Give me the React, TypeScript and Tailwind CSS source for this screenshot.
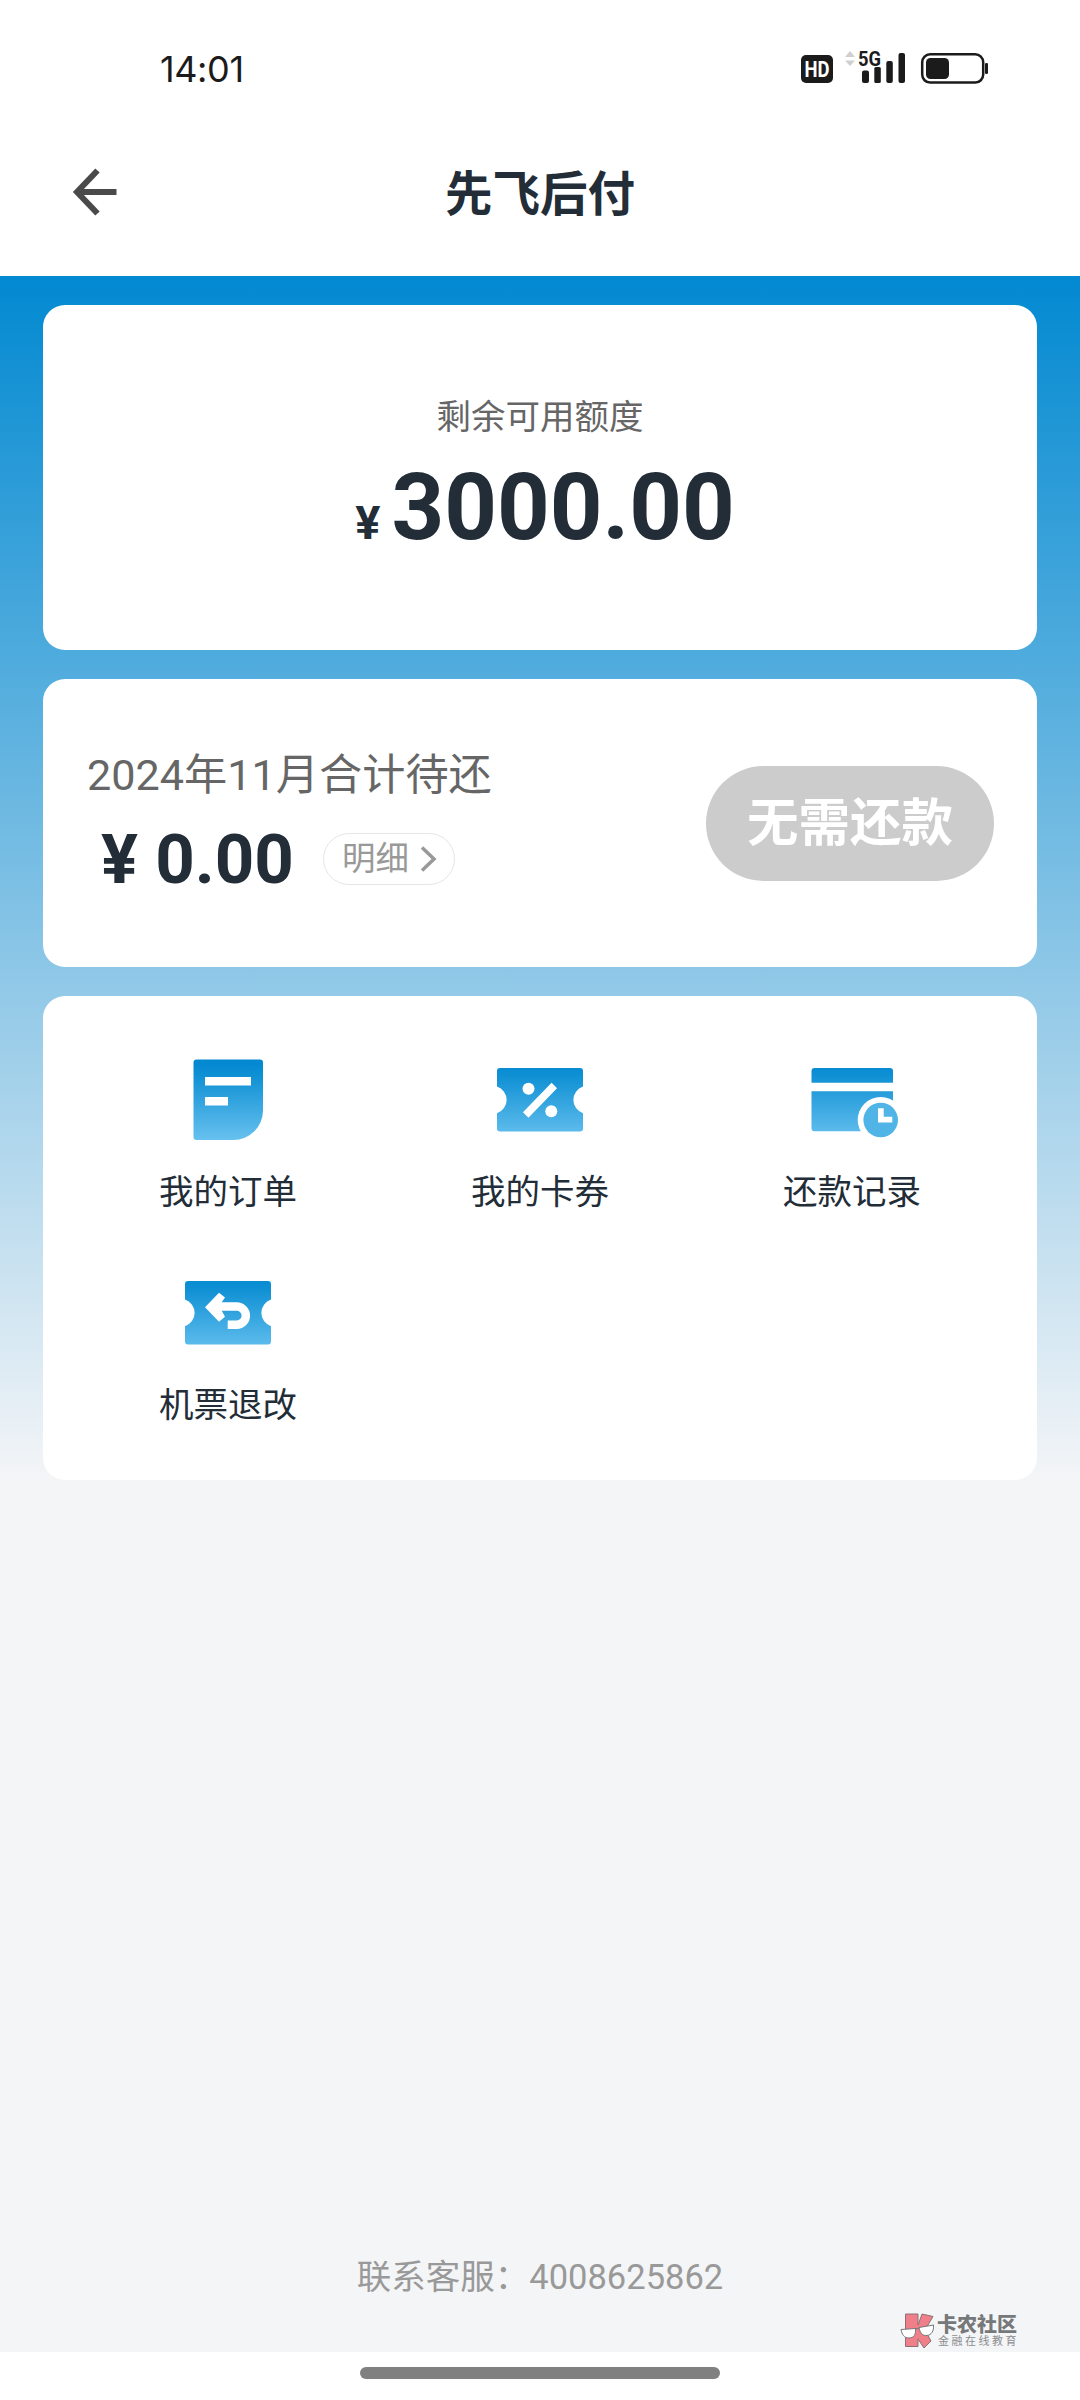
import type { ReactNode } from "react";

function Gradient({ id }: { id: string }) {
  return (
    <defs>
      <linearGradient id={id} x1="0" y1="14" x2="0" y2="90" gradientUnits="userSpaceOnUse">
        <stop offset="0" stopColor="#0489d1" />
        <stop offset="0.15" stopColor="#0f90d4" />
        <stop offset="1" stopColor="#67c1ef" />
      </linearGradient>
    </defs>
  );
}

const TICKET =
  "M10 18H90a3 3 0 0 1 3 3V36.6a14 14 0 0 0 0 26.6V78.5a3 3 0 0 1-3 3H10a3 3 0 0 1-3-3V63.2a14 14 0 0 0 0-26.6V21a3 3 0 0 1 3-3Z";

function OrderIcon() {
  return (
    <svg className="size-[100px]" viewBox="0 0 100 100">
      <Gradient id="order" />
      <path d="M18.5 9.5H82a3 3 0 0 1 3 3V60.500A29.500 29.500 0 0 1 55.500 90H18.500a3 3 0 0 1-3-3V12.500a3 3 0 0 1 3-3Z" fill="url(#order)" />
      <path d="M27 27H73V35.600H27ZM27 47H50V55.600H27Z" fill="#fff" />
    </svg>
  );
}

function CouponIcon() {
  return (
    <svg className="size-[100px]" viewBox="0 0 100 100">
      <Gradient id="coupon" />
      <path d={TICKET} fill="url(#coupon)" />
      <circle cx="38.500" cy="38.700" r="6" fill="#fff" />
      <circle cx="61.300" cy="61.300" r="6" fill="#fff" />
      <path d="M35.700 65L64.300 35.500" stroke="#fff" strokeWidth="7.600" />
    </svg>
  );
}

function RecordIcon() {
  return (
    <svg className="size-[100px]" viewBox="0 0 100 100">
      <Gradient id="record" />
      <path d="M12.500 18H88a3 3 0 0 1 3 3V32.700H9.500V21a3 3 0 0 1 3-3ZM9.500 41.300H91V81.300H12.500a3 3 0 0 1-3-3Z" fill="url(#record)" />
      <circle cx="78.700" cy="70" r="23" fill="#fff" />
      <circle cx="78.700" cy="70" r="17.300" fill="#50b4e6" />
      <path d="M76 58.300H81.700V66.700H90.300V72.600H76Z" fill="#fff" />
    </svg>
  );
}

function RefundIcon() {
  return (
    <svg className="size-[100px]" viewBox="0 0 100 100">
      <Gradient id="refund" />
      <path d={TICKET} fill="url(#refund)" />
      <path
        d="M27 44.300L41 29.700L47 34.500L43.700 39.300H58.700A13.350 13.350 0 0 1 58.700 66H49.700V57.500H58.700A4.900 4.900 0 0 0 58.700 47.700H43.700L47 53.700L41 58.700Z"
        fill="#fff"
      />
    </svg>
  );
}

function StatusIcons() {
  return (
    <svg className="h-[40px] w-[200px]" viewBox="795 48 200 40">
      <rect x="801" y="55" width="32" height="28" rx="5" fill="#1b1b1b" />
      <text x="817" y="77" textAnchor="middle" textLength="25" lengthAdjust="spacingAndGlyphs" fontFamily="Roboto" fontWeight="700" fontSize="22.500" fill="#fff">HD</text>
      <path d="M845 57L850 51L855 57ZM845 60.500L850 66L855 60.500Z" fill="#cfcfcf" />
      <rect x="862" y="70.500" width="7" height="12.500" rx="2" fill="#1b1b1b" />
      <rect x="874.300" y="67" width="6.500" height="16" rx="1.500" fill="#1b1b1b" />
      <rect x="886.300" y="61" width="6.500" height="22" rx="2" fill="#1b1b1b" />
      <rect x="898.500" y="53" width="6.500" height="30" rx="2" fill="#1b1b1b" />
      <text x="858" y="66" textLength="23" lengthAdjust="spacingAndGlyphs" fontFamily="Roboto" fontWeight="700" fontSize="20.500" fill="#1b1b1b">5G</text>
      <rect x="922.200" y="54.200" width="61" height="28.400" rx="8" fill="none" stroke="#1b1b1b" strokeWidth="2.500" />
      <rect x="926" y="58" width="23" height="21" rx="4.500" fill="#1b1b1b" />
      <rect x="985" y="63" width="3" height="11" rx="1.200" fill="#1b1b1b" />
    </svg>
  );
}

function Tile({ icon, label }: { icon: ReactNode; label: string }) {
  return (
    <div className="flex h-[213px] flex-col items-center">
      {icon}
      <span className="mt-[17px] text-[34.5px] leading-[50px]">{label}</span>
    </div>
  );
}

function Watermark() {
  return (
    <div className="absolute right-[60px] bottom-0 flex h-[40px] w-[120px] gap-[2px]">
      <svg className="mt-px h-[37px] w-[35px] shrink-0" viewBox="0 0 35 37">
        <path d="M5.500 1H18V12L22 1L33 3.500L25 17L31 28L24 35L18 26V33.500H5.500Z" fill="#ef7f88" stroke="#8b7075" strokeWidth="1" />
        <path d="M1 16.500L15.500 15.500C16 21.500 14 25 9 25S2 21.500 1 16.500ZM19 14.500L33.500 12C34 18 31.500 22 27 22.500S20 20 19 14.500Z" fill="#fff" stroke="#77777a" strokeWidth="1" />
        <path d="M15 16L19 15" stroke="#77777a" strokeWidth="1" />
      </svg>
      <div className="flex flex-col whitespace-nowrap">
        <span className="mt-[2px] text-[20px] leading-[23px] font-black text-[#77787a]">卡农社区</span>
        <span className="-mt-[3px] pl-[1px] text-[11px] leading-[16px] tracking-[2.5px] text-[#8b8c8f]">金融在线教育</span>
      </div>
    </div>
  );
}

export default function App() {
  return (
    <div className="flex h-[2400px] w-[1080px] flex-col bg-white font-[Roboto,'Noto_Sans_CJK_SC',sans-serif] text-[#222d38]">
      <div className="flex h-[110px] items-start justify-between pr-[85px] pl-[160px]">
        <span className="mt-[47px] font-[Inter] text-[36px] leading-[44px] tracking-[-0.4px] text-[#1b1b1b]">14:01</span>
        <div className="mt-[48px]">
          <StatusIcons />
        </div>
      </div>

      <header className="grid h-[166px] grid-cols-[1fr_auto_1fr] items-start">
        <svg className="mt-[56px] ml-[71px] h-[52px] w-[52px]" viewBox="71 166 52 52" fill="none" stroke="#4a4a4a" strokeWidth="6">
          <path d="M116.500 192H79M97.500 170.500L77 192L97.500 213.500" />
        </svg>
        <h1 className="mt-[52px] text-[47.5px] leading-[66px] font-bold">先飞后付</h1>
        <span />
      </header>

      <main className="relative flex h-[2076px] flex-col gap-[29px] bg-[#f4f5f7] bg-[linear-gradient(#0289d1,#f4f5f7)] bg-[length:100%_1204px] bg-no-repeat px-[43px] pt-[29px]">
        <section className="flex h-[345px] flex-col items-center rounded-[22px] bg-white pt-[87px]">
          <span className="text-[34.5px] leading-[50px] text-[#666]">剩余可用额度</span>
          <div className="flex items-baseline gap-[11px] pt-[1px] pl-[10px] font-bold">
            <span className="text-[47px]">¥</span>
            <span className="text-[92px] leading-[130px]">3000.00</span>
          </div>
        </section>

        <section className="flex h-[288px] items-center justify-between rounded-[22px] bg-white px-[43px]">
          <div className="flex flex-col pt-[13px]">
            <span className="pl-px text-[43.2px] leading-[60px] text-[#666]">2024年11月合计待还</span>
            <div className="flex items-center">
              <span className="pl-[15px] text-[69px] leading-[108px] font-bold whitespace-pre">¥ 0.00</span>
              <div className="-mt-[2px] ml-[29px] flex h-[52px] w-[132px] items-center gap-[11px] rounded-full border border-[#e6e6e6] pl-[18px] text-[#999]">
                <span className="text-[33.5px] leading-[48px]">明细</span>
                <svg className="h-[26px] w-[17px]" viewBox="0 0 17 26" fill="none" stroke="#999" strokeWidth="3.5">
                  <path d="M2 1.500L14 13L2 24.500" />
                </svg>
              </div>
            </div>
          </div>
          <button className="h-[115px] w-[288px] rounded-full bg-[#ccc] pt-[2px] text-[51.5px] font-bold text-white">无需还款</button>
        </section>

        <section className="grid h-[484px] grid-cols-3 content-start rounded-[22px] bg-white px-[29px] pt-[54px]">
          <Tile icon={<OrderIcon />} label="我的订单" />
          <Tile icon={<CouponIcon />} label="我的卡券" />
          <Tile icon={<RecordIcon />} label="还款记录" />
          <Tile icon={<RefundIcon />} label="机票退改" />
        </section>

        <footer className="mt-auto mb-[50px] text-center text-[34.5px] leading-[50px] text-[#999]">联系客服：4008625862</footer>
        <Watermark />
      </main>

      <div className="flex h-[48px] justify-center pt-[15px]">
        <div className="h-[12px] w-[360px] rounded-full bg-[#808080]" />
      </div>
    </div>
  );
}
